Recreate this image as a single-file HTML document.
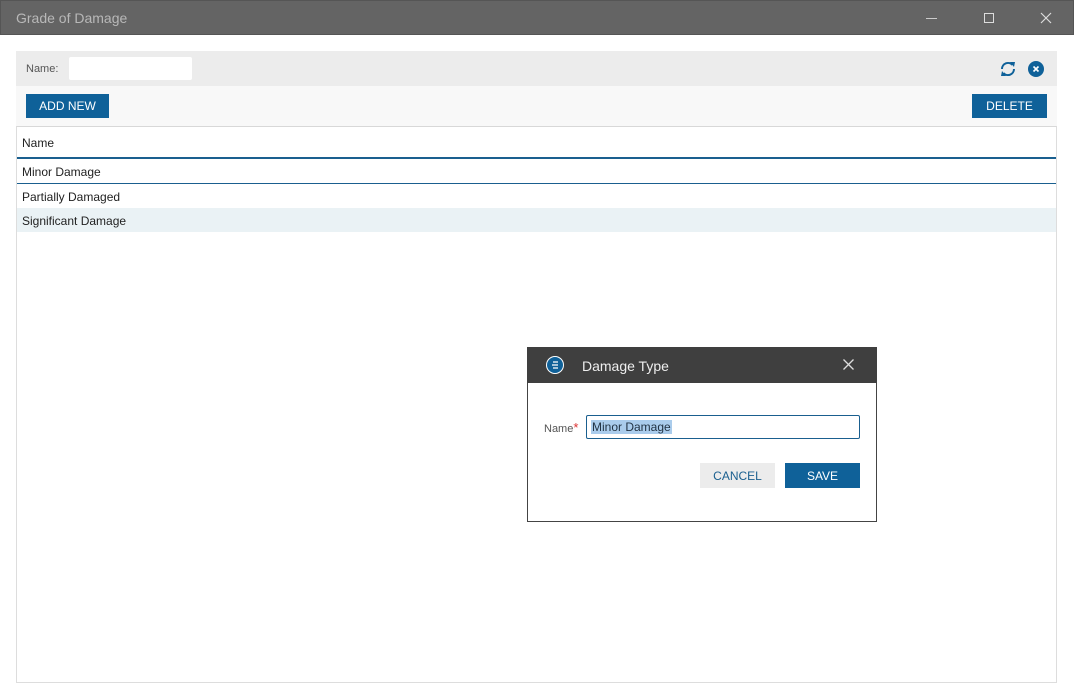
<!DOCTYPE html>
<html><head><style>
*{margin:0;padding:0;box-sizing:border-box}
body{width:1074px;height:699px;background:#fff;font-family:"Liberation Sans",sans-serif;position:relative;overflow:hidden;font-size:12px;color:#222}
.a{position:absolute}
.btn{position:absolute;background:#0f6199;color:#fff;font-size:12px;display:flex;align-items:center;justify-content:center}
</style></head><body>
<div class="a" style="left:0;top:0;width:1074px;height:35px;background:#646464;border:1px solid #555"></div>
<div class="a" style="left:16px;top:10px;font-size:14px;color:#b8b8b8">Grade of Damage</div>
<div class="a" style="left:926px;top:18px;width:11px;height:1px;background:#ccc"></div>
<div class="a" style="left:984px;top:13px;width:10px;height:10px;border:1px solid #ddd"></div>
<svg class="a" style="left:1040px;top:12px" width="12" height="12"><path d="M1 1L11 11M11 1L1 11" stroke="#ddd" stroke-width="1.2"/></svg>

<div class="a" style="left:16px;top:51px;width:1041px;height:35px;background:#ececec"></div>
<div class="a" style="left:26px;top:63px;font-size:11px;color:#555">Name:</div>
<div class="a" style="left:69px;top:57px;width:123px;height:23px;background:#fff;border-radius:2px"></div>
<svg class="a" style="left:998px;top:60px" width="20" height="18" viewBox="0 0 20 18"><path d="M4 9a6 6 0 0 1 10.5-4M16 9a6 6 0 0 1-10.5 4" fill="none" stroke="#0f6199" stroke-width="2"/><path d="M12 2l5 0-1 5z M8 16l-5 0 1-5z" fill="#0f6199"/></svg>
<div class="a" style="left:1028px;top:61px;width:16px;height:16px;border-radius:50%;background:#0f6199"></div>
<svg class="a" style="left:1028px;top:61px" width="16" height="16"><path d="M5.5 5.5l5 5M10.5 5.5l-5 5" stroke="#fff" stroke-width="1.6"/></svg>

<div class="a" style="left:16px;top:86px;width:1041px;height:40px;background:#f8f8f8"></div>
<div class="btn" style="left:26px;top:94px;width:83px;height:24px">ADD NEW</div>
<div class="btn" style="left:972px;top:94px;width:75px;height:24px">DELETE</div>

<div class="a" style="left:16px;top:126px;width:1041px;height:557px;border:1px solid #ddd;border-top:1px solid #d8d8d8"></div>
<div class="a" style="left:22px;top:136px">Name</div>
<div class="a" style="left:17px;top:157px;width:1039px;height:2px;background:#1a5f8f"></div>
<div class="a" style="left:22px;top:165px">Minor Damage</div>
<div class="a" style="left:17px;top:183px;width:1039px;height:1px;background:#1a5f8f"></div>
<div class="a" style="left:22px;top:190px">Partially Damaged</div>
<div class="a" style="left:17px;top:208px;width:1039px;height:24px;background:#eaf2f5"></div>
<div class="a" style="left:22px;top:214px">Significant Damage</div>

<div class="a" style="left:527px;top:347px;width:350px;height:175px;border:1px solid #444;background:#fff"></div>
<div class="a" style="left:527px;top:347px;width:350px;height:36px;background:#3f3f3f"></div>
<div class="a" style="left:546px;top:356px;width:18px;height:18px;border-radius:50%;background:#fff"></div>
<div class="a" style="left:547px;top:357px;width:16px;height:16px;border-radius:50%;background:#0f6199"></div>
<svg class="a" style="left:547px;top:357px" width="16" height="16"><path d="M6 5h5M5 8h6M6 11h5" stroke="#fff" stroke-width="1.2"/></svg>
<div class="a" style="left:582px;top:358px;font-size:14px;color:#eee">Damage Type</div>
<svg class="a" style="left:843px;top:359px" width="11" height="11"><path d="M0.5 0.5l10 10M10.5 0.5l-10 10" stroke="#ddd" stroke-width="1.3"/></svg>
<div class="a" style="left:544px;top:420px;font-size:11px;color:#555">Name<span style="color:#d33;font-size:13px">*</span></div>
<div class="a" style="left:586px;top:415px;width:274px;height:24px;border:1px solid #1a5f8f;border-radius:2px"></div>
<div class="a" style="left:591px;top:420px;background:#aaccec;color:#234;font-size:12px;padding:0 1px">Minor Damage</div>
<div class="a" style="left:700px;top:463px;width:75px;height:25px;background:#ececec;color:#1a5f8f;display:flex;align-items:center;justify-content:center">CANCEL</div>
<div class="btn" style="left:785px;top:463px;width:75px;height:25px">SAVE</div>
</body></html>
